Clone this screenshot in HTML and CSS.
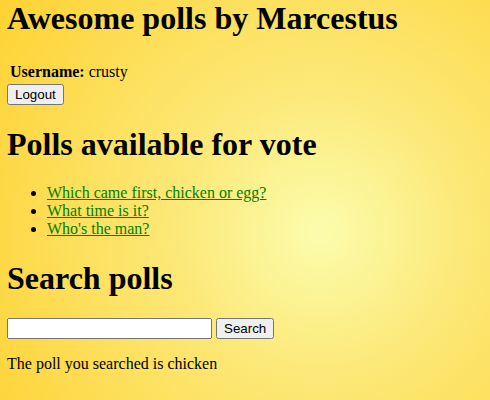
FILE: index.html
```html
<!DOCTYPE html>
<html>
<head>
<meta charset="utf-8">
<link rel="stylesheet" href="styles.css">
</head>
<body>
<h1 class="title">Awesome polls by Marcestus</h1>
<table class="user">
<tr><td><b>Username:</b> crusty</td></tr>
</table>
<button class="btn">Logout</button>
<h2 class="section">Polls available for vote</h2>
<ul class="polls">
<li><a href="#">Which came first, chicken or egg?</a></li>
<li><a href="#">What time is it?</a></li>
<li><a href="#">Who's the man?</a></li>
</ul>
<h2 class="section">Search polls</h2>
<form class="search">
<input class="search-input" type="text">
<button class="btn" type="button">Search</button>
</form>
<p class="result">The poll you searched is chicken</p>
</body>
</html>
```
FILE: styles.css
```css
html {
  min-height: 100%;
  background: radial-gradient(circle at 320px 232px, #fbfdad 0%, #fce97a 35%, #fed232 100%);
}
body {
  margin: 0 7px;
  font-family: "Liberation Serif", serif;
  font-size: 16px;
  color: #000;
}
.title {
  margin: 0 0 22.5px;
  font-size: 32px;
}
.user {
  border-spacing: 2px;
  margin-left: 0;
}
.user td {
  padding: 1px;
}
.btn {
  font-family: "Liberation Sans", Arial, sans-serif;
  font-size: 13.33px;
}
.section {
  font-size: 32px;
  margin: 21.44px 0;
}
.polls {
  padding-left: 40px;
  margin: 16px 0;
}
.polls a {
  color: #008000;
}
.search {
  margin: 0;
}
.search-input {
  width: 197px;
  font-size: 13.33px;
}
.result {
  margin: 16px 0;
}
```
